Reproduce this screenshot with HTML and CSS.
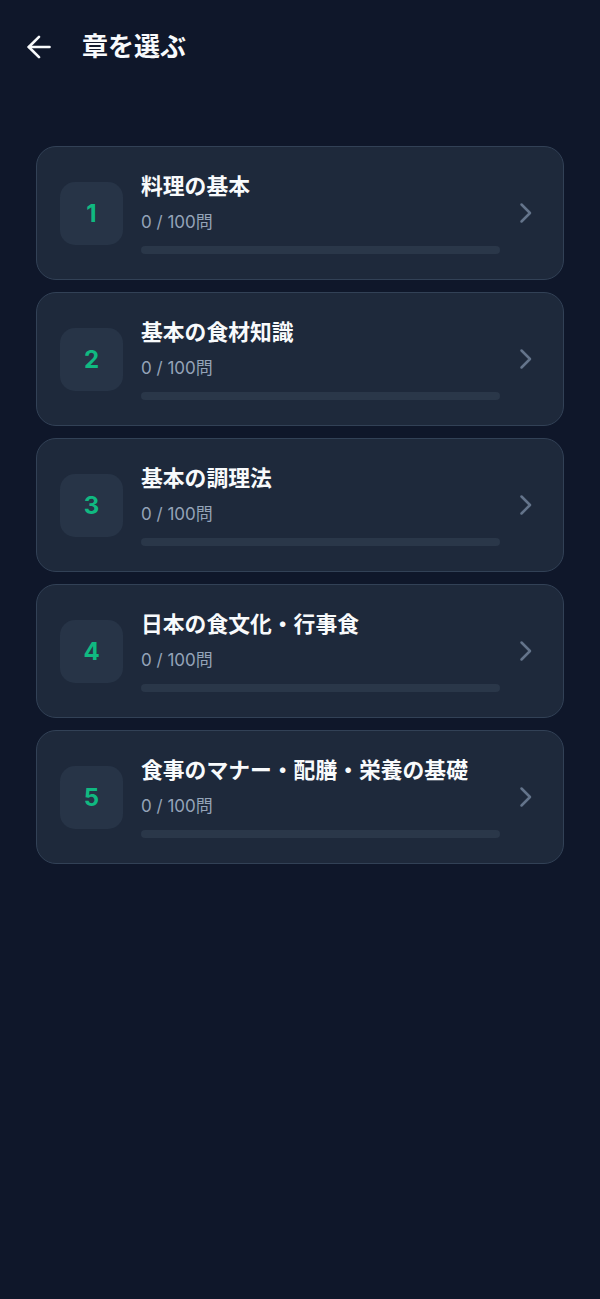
FILE: index.html
```html
<!DOCTYPE html>
<html lang="ja">
<head>
<meta charset="utf-8">
<meta name="viewport" content="width=device-width, initial-scale=1">
<title>章を選ぶ</title>
<link rel="stylesheet" href="styles.css">
</head>
<body>
<header class="header">
  <button class="back" aria-label="戻る">
    <svg width="24" height="24" viewBox="0 0 24 24" fill="none" stroke="currentColor" stroke-width="2.6" stroke-linecap="round" stroke-linejoin="round"><path d="M22.5 12H1.8"/><path d="M12 1.8 1.8 12 12 22.2"/></svg>
  </button>
  <h1 class="title">章を選ぶ</h1>
</header>
<main class="list">
  <div class="card">
    <div class="num">1</div>
    <div class="info">
      <div class="name">料理の基本</div>
      <div class="count">0 / 100問</div>
      <div class="bar"><div class="fill" style="width:0%"></div></div>
    </div>
    <svg class="chev" width="16" height="24" viewBox="0 0 16 24" fill="none" stroke="currentColor" stroke-width="2.5" stroke-linecap="round" stroke-linejoin="round"><polyline points="3.5,3.5 12,12 3.5,20.5"/></svg>
  </div>
  <div class="card">
    <div class="num">2</div>
    <div class="info">
      <div class="name">基本の食材知識</div>
      <div class="count">0 / 100問</div>
      <div class="bar"><div class="fill" style="width:0%"></div></div>
    </div>
    <svg class="chev" width="16" height="24" viewBox="0 0 16 24" fill="none" stroke="currentColor" stroke-width="2.5" stroke-linecap="round" stroke-linejoin="round"><polyline points="3.5,3.5 12,12 3.5,20.5"/></svg>
  </div>
  <div class="card">
    <div class="num">3</div>
    <div class="info">
      <div class="name">基本の調理法</div>
      <div class="count">0 / 100問</div>
      <div class="bar"><div class="fill" style="width:0%"></div></div>
    </div>
    <svg class="chev" width="16" height="24" viewBox="0 0 16 24" fill="none" stroke="currentColor" stroke-width="2.5" stroke-linecap="round" stroke-linejoin="round"><polyline points="3.5,3.5 12,12 3.5,20.5"/></svg>
  </div>
  <div class="card">
    <div class="num">4</div>
    <div class="info">
      <div class="name">日本の食文化・行事食</div>
      <div class="count">0 / 100問</div>
      <div class="bar"><div class="fill" style="width:0%"></div></div>
    </div>
    <svg class="chev" width="16" height="24" viewBox="0 0 16 24" fill="none" stroke="currentColor" stroke-width="2.5" stroke-linecap="round" stroke-linejoin="round"><polyline points="3.5,3.5 12,12 3.5,20.5"/></svg>
  </div>
  <div class="card">
    <div class="num">5</div>
    <div class="info">
      <div class="name">食事のマナー・配膳・栄養の基礎</div>
      <div class="count">0 / 100問</div>
      <div class="bar"><div class="fill" style="width:0%"></div></div>
    </div>
    <svg class="chev" width="16" height="24" viewBox="0 0 16 24" fill="none" stroke="currentColor" stroke-width="2.5" stroke-linecap="round" stroke-linejoin="round"><polyline points="3.5,3.5 12,12 3.5,20.5"/></svg>
  </div>
</main>
</body>
</html>
```
FILE: styles.css
```css
* { box-sizing: border-box; }
html, body { margin: 0; padding: 0; }
body {
  background: #0f172a;
  color: #f8fafc;
  font-family: Inter, "Noto Sans CJK JP", "Noto Sans", sans-serif;
  min-height: 1299px;
}
.header {
  display: flex;
  align-items: center;
  gap: 31px;
  padding: 30px 0 0 27px;
  height: 64px;
}
.back {
  display: flex;
  align-items: center;
  justify-content: center;
  width: 24px;
  height: 24px;
  padding: 0;
  border: 0;
  background: none;
  color: #f8fafc;
}
.title {
  margin: 0;
  font-size: 26px;
  line-height: 34px;
  font-weight: 700;
  color: #f8fafc;
}
.list {
  display: flex;
  flex-direction: column;
  gap: 12px;
  margin: 82px 36px 0;
}
.card {
  display: flex;
  align-items: center;
  height: 134px;
  padding: 0 29px 0 23px;
  background: #1e293b;
  border: 1px solid #324156;
  border-radius: 20px;
}
.num {
  flex: none;
  width: 63px;
  height: 63px;
  border-radius: 15px;
  background: #273447;
  color: #10b981;
  font-size: 24px;
  font-weight: 700;
  display: flex;
  align-items: center;
  justify-content: center;
}
.info {
  flex: 1;
  margin-left: 18px;
  display: flex;
  flex-direction: column;
}
.name {
  font-size: 21.8px;
  line-height: 28px;
  font-weight: 700;
  color: #f8fafc;
}
.count {
  margin-top: 10px;
  font-size: 17px;
  line-height: 24px;
  color: #94a3b8;
}
.bar {
  margin-top: 12px;
  height: 8px;
  border-radius: 4px;
  background: #2a3749;
  overflow: hidden;
}
.fill {
  height: 100%;
  background: #10b981;
}
.chev {
  flex: none;
  margin-left: 18px;
  color: #64748b;
}
```
